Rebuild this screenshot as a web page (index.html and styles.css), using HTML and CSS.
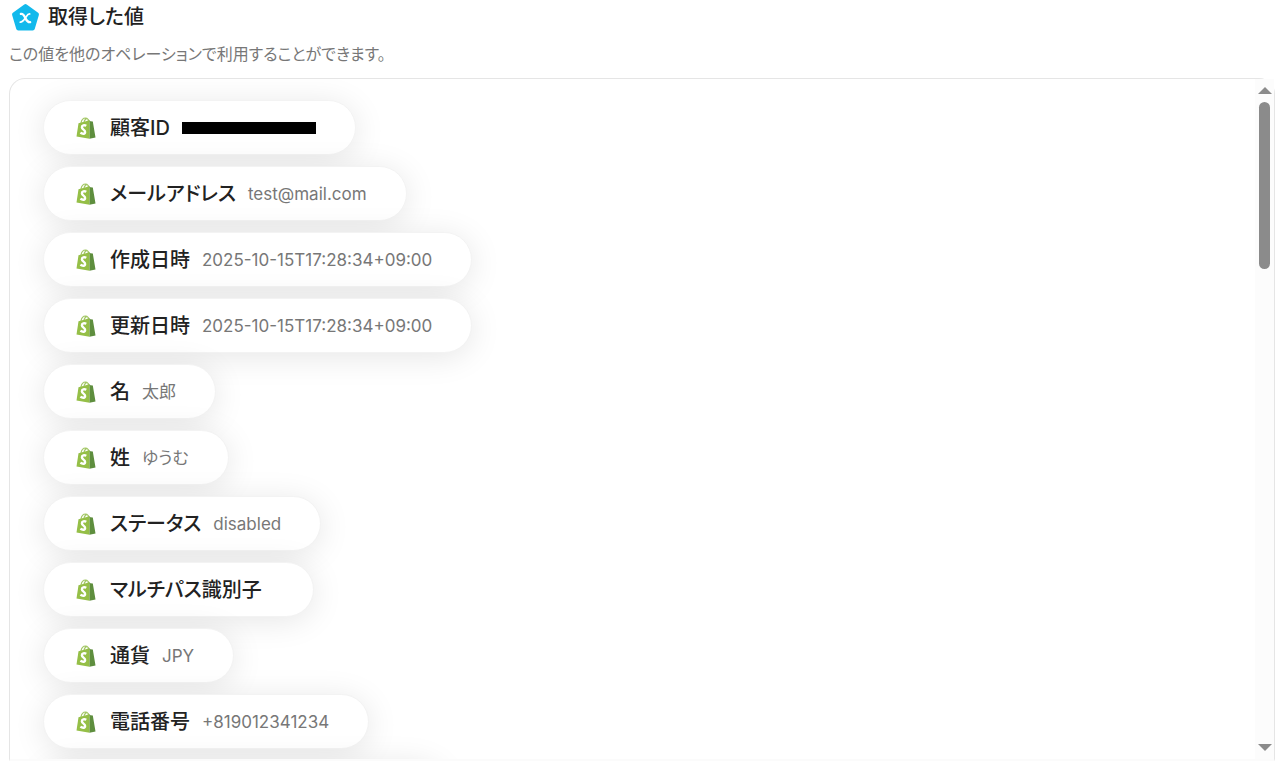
FILE: index.html
```html
<!DOCTYPE html>
<html lang="ja">
<head>
    <meta charset="UTF-8">
    <meta name="viewport" content="width=device-width, initial-scale=1.0">
    <title>取得した値</title>
    <link rel="stylesheet" href="styles.css">
</head>
<body>
    <!-- Shared icons -->
    <svg class="sprite" aria-hidden="true">
        <symbol id="bag" viewBox="0 0 20 22">
            <path d="M5 6C5.500 3 7.500 1 9.500 1C11.500 1 12.500 3 12.500 5M8 5.500C8.300 3 10 1.300 11.300 1.800C12.500 2.200 13 3.500 13.200 4.800" fill="none" stroke="#a3c766" stroke-width="1.200"/>
            <path d="M2.500 6.200L13.500 3.200V21.800L.5 19.400Z" fill="#95bf47"/>
            <path d="M13.500 3.200L14.400 4.200L16.800 4.500L19.500 20.500L13.500 21.800Z" fill="#5e8e3e"/>
            <path d="M10.300 8.800C8.300 7.800 5.900 8.300 5.900 10.300C5.900 12.600 9.100 12.600 9.100 14.900C9.100 17.200 6.500 17.200 4.400 15.800" fill="none" stroke="#fff" stroke-width="2.400"/>
        </symbol>
    </svg>

    <!-- Header Section -->
    <header class="header">
        <svg class="logo" viewBox="0 0 28 28" aria-hidden="true">
            <path d="M14 3L25 11L21 24.500H7L3 11Z" fill="#12b9ec" stroke="#12b9ec" stroke-width="4" stroke-linejoin="round"/>
            <path d="M9.500 10.500C12 9.800 12.500 12 13.800 14.500S16 19 18.500 18.500" fill="none" stroke="#fff" stroke-width="2.200" stroke-linecap="round"/>
            <path d="M18 10.500C16 10.500 15.500 12 13.800 14.500S11 18.500 9 18.500" fill="none" stroke="#fff" stroke-width="1.700" stroke-linecap="round"/>
        </svg>
        <h1 class="title">取得した値</h1>
    </header>
    <p class="description">この値を他のオペレーションで利用することができます。</p>

    <!-- Values -->
    <main class="panel">
        <ul class="values">
            <li class="value"><svg class="icon"><use href="#bag"/></svg><span class="label">顧客ID</span><span class="masked"></span></li>
            <li class="value"><svg class="icon"><use href="#bag"/></svg><span class="label">メールアドレス</span><span class="data">test@mail.com</span></li>
            <li class="value"><svg class="icon"><use href="#bag"/></svg><span class="label">作成日時</span><span class="data">2025-10-15T17:28:34+09:00</span></li>
            <li class="value"><svg class="icon"><use href="#bag"/></svg><span class="label">更新日時</span><span class="data">2025-10-15T17:28:34+09:00</span></li>
            <li class="value"><svg class="icon"><use href="#bag"/></svg><span class="label">名</span><span class="data">太郎</span></li>
            <li class="value"><svg class="icon"><use href="#bag"/></svg><span class="label">姓</span><span class="data">ゆうむ</span></li>
            <li class="value"><svg class="icon"><use href="#bag"/></svg><span class="label">ステータス</span><span class="data">disabled</span></li>
            <li class="value"><svg class="icon"><use href="#bag"/></svg><span class="label">マルチパス識別子</span><span class="data"></span></li>
            <li class="value"><svg class="icon"><use href="#bag"/></svg><span class="label">通貨</span><span class="data">JPY</span></li>
            <li class="value"><svg class="icon"><use href="#bag"/></svg><span class="label">電話番号</span><span class="data">+819012341234</span></li>
            <li class="value blank"></li>
        </ul>
        <div class="scrollbar" aria-hidden="true">
            <span class="arrow up"></span>
            <span class="rail"><span class="thumb"></span></span>
            <span class="arrow down"></span>
        </div>
    </main>
</body>
</html>
```
FILE: styles.css
```css
* {
    box-sizing: border-box;
}

body {
    margin: 0;
    padding: 0 6px 0 9px;
    height: 100vh;
    display: flex;
    flex-direction: column;
    overflow: hidden;
    background: #fff;
    color: #222;
    font-family: Inter, "Noto Sans CJK JP", sans-serif;
    font-feature-settings: "palt";
}

.sprite {
    display: none;
}

/* Header Section */
.header {
    display: flex;
    align-items: center;
    gap: 8px;
    height: 34px;
    padding-left: 2px;
    flex-shrink: 0;
}

.logo {
    width: 29px;
    height: 29px;
}

.title {
    margin: 0;
    font-size: 20px;
    font-weight: 500;
    line-height: 32px;
}

.description {
    margin: 10px 0 14px;
    font-size: 16px;
    line-height: 20px;
    color: #777;
}

/* Values */
.panel {
    flex: 1;
    min-height: 0;
    display: flex;
    border: 1px solid #e5e5e5;
    border-bottom: 2px solid #fbfbfb;
    border-radius: 16px 16px 0 0;
}

.values {
    flex: 1;
    margin: 0;
    padding: 21px 33px;
    list-style: none;
    display: flex;
    flex-direction: column;
    align-items: flex-start;
    gap: 11px;
    overflow-y: auto;
    scrollbar-width: none;
    border-top-left-radius: 15px;
}

.value {
    flex-shrink: 0;
    display: flex;
    align-items: center;
    height: 55px;
    padding: 0 39px 0 32px;
    border: 1px solid #f3f3f3;
    border-radius: 28px;
    background: #fff;
    box-shadow: 0 4px 32px rgba(0, 0, 0, 0.1);
}

.blank {
    width: 400px;
}

.icon {
    width: 20px;
    height: 22px;
    margin-right: 14px;
}

.label {
    margin-right: 12px;
    font-size: 20px;
    font-weight: 500;
    line-height: 28px;
}

.data {
    font-size: 17px;
    line-height: 24px;
    color: #777;
}

.masked {
    width: 134px;
    height: 12px;
    background: #000;
}

/* Scrollbar */
.scrollbar {
    width: 19px;
    padding: 8px 0;
    display: flex;
    flex-direction: column;
    align-items: center;
    background: #fcfcfc;
}

.arrow {
    border: 7px solid transparent;
}

.up {
    border-top: 0;
    border-bottom-color: #8b8b8b;
}

.down {
    border-bottom: 0;
    border-top-color: #8b8b8b;
}

.rail {
    flex: 1;
    padding-top: 8px;
}

.thumb {
    display: block;
    width: 11px;
    height: 26%;
    border-radius: 6px;
    background: #8b8b8b;
}
```
